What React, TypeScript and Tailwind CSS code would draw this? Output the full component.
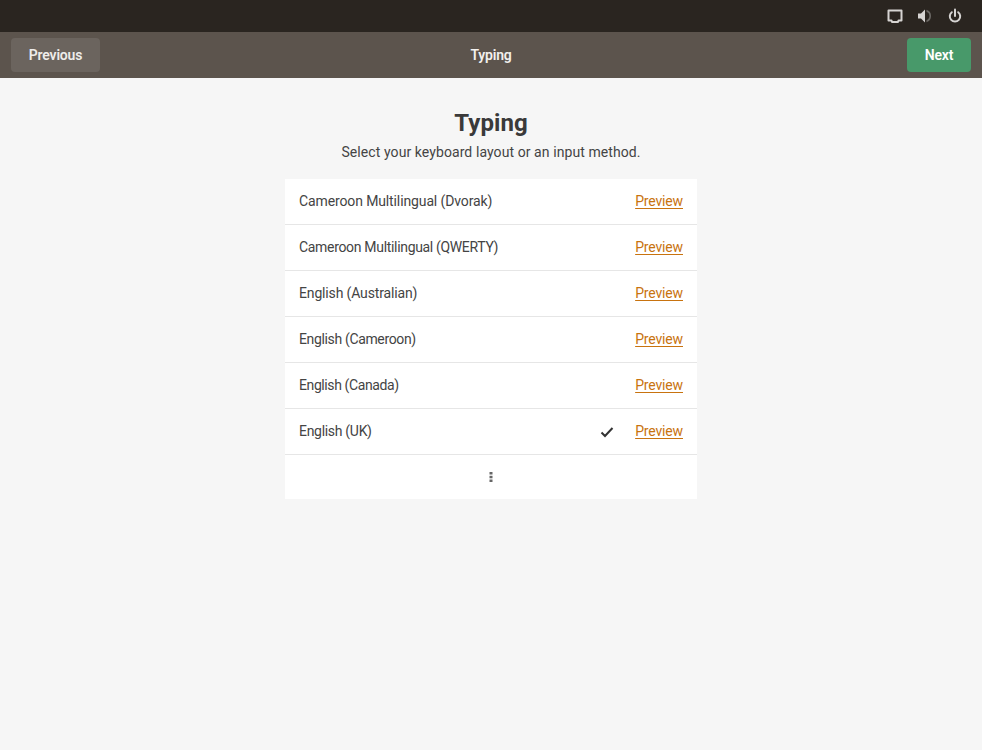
import React from 'react';

const layouts = [
  { name: 'Cameroon Multilingual (Dvorak)', spacing: 'tracking-[-0.12px]' },
  { name: 'Cameroon Multilingual (QWERTY)', spacing: 'tracking-[-0.32px]' },
  { name: 'English (Australian)', spacing: 'tracking-[-0.15px]' },
  { name: 'English (Cameroon)', spacing: 'tracking-[-0.35px]' },
  { name: 'English (Canada)', spacing: 'tracking-[-0.4px]' },
  { name: 'English (UK)', spacing: 'tracking-[-0.3px]', selected: true },
];

function TrayIcons() {
  return (
    <div className="flex items-center gap-[14px] text-[#d6d4d2]">
      <svg width="16" height="16" viewBox="0 0 16 16" fill="none">
        <path d="M1.500 2.500h13v10h-3l-.5 1.500H5l-.5-1.500h-3z" stroke="currentColor" strokeWidth="2" strokeLinejoin="round" />
      </svg>
      <svg width="16" height="16" viewBox="0 0 16 16" fill="none">
        <path d="M1 5.500h3L8 1.500v13l-4-4H1z" fill="currentColor" />
        <path d="M9.500 1.800a6.500 6.500 0 0 1 0 12.400v-2a4.500 4.500 0 0 0 0-8.400z" fill="#6a6763" />
      </svg>
      <svg width="16" height="16" viewBox="0 0 16 16" fill="none">
        <path d="M8 1.500v6.500" stroke="currentColor" strokeWidth="2" strokeLinecap="round" />
        <path d="M4.800 4.200a5.200 5.200 0 1 0 6.400 0" stroke="currentColor" strokeWidth="2" strokeLinecap="round" />
      </svg>
    </div>
  );
}

export default function App() {
  return (
    <div className="h-[750px] flex flex-col bg-[#f6f6f6] font-['Roboto',sans-serif] text-[14px] text-[#333]">
      {/* Top panel */}
      <div className="h-8 flex items-center justify-end pr-[19px] bg-[#2a2520]">
        <TrayIcons />
      </div>

      {/* Header */}
      <div className="h-[46px] grid grid-cols-[1fr_auto_1fr] items-center px-[11px] bg-[#5c544d]">
        <button className="justify-self-start w-[89px] h-[34px] rounded-[4px] bg-[#6b645e] text-[#eeeceb] font-semibold tracking-[-0.2px]">Previous</button>
        <span className="text-[#f2f0ee] font-semibold tracking-[-0.2px]">Typing</span>
        <button className="justify-self-end w-[64px] h-[34px] rounded-[4px] bg-[#48996a] text-white font-semibold tracking-[-0.2px]">Next</button>
      </div>

      {/* Content */}
      <div className="flex flex-col items-center">
        <h1 className="mt-[28px] text-[24px] leading-[34px] font-bold text-[#3a3a3a] tracking-[0.1px]">Typing</h1>
        <p className="mt-[2px] leading-[20px] text-[#444] tracking-[0.08px]">Select your keyboard layout or an input method.</p>

        <div className="mt-[17px] w-[412px] bg-white">
          {layouts.map(l => (
            <div key={l.name} className="h-[46px] flex items-center px-[14px] border-b border-[#e6e6e6]">
              <span className={`flex-1 text-[#444] ${l.spacing}`}>{l.name}</span>
              {l.selected && (
                <svg className="mr-[21px]" width="14" height="14" viewBox="0 0 14 14" fill="none">
                  <path d="M1.500 7.500l3.500 3.500 7.500-8" stroke="#333" strokeWidth="2" />
                </svg>
              )}
              <a className="text-[#c8730f] underline underline-offset-2 tracking-[-0.15px]">Preview</a>
            </div>
          ))}
          <div className="h-[44px] flex items-center justify-center">
            <svg width="4" height="12" viewBox="0 0 4 12" fill="#666">
              <rect x="0.500" y="1" width="3" height="2.500" />
              <rect x="0.500" y="4.800" width="3" height="2.500" />
              <rect x="0.500" y="8.500" width="3" height="2.500" />
            </svg>
          </div>
        </div>
      </div>
    </div>
  );
}
